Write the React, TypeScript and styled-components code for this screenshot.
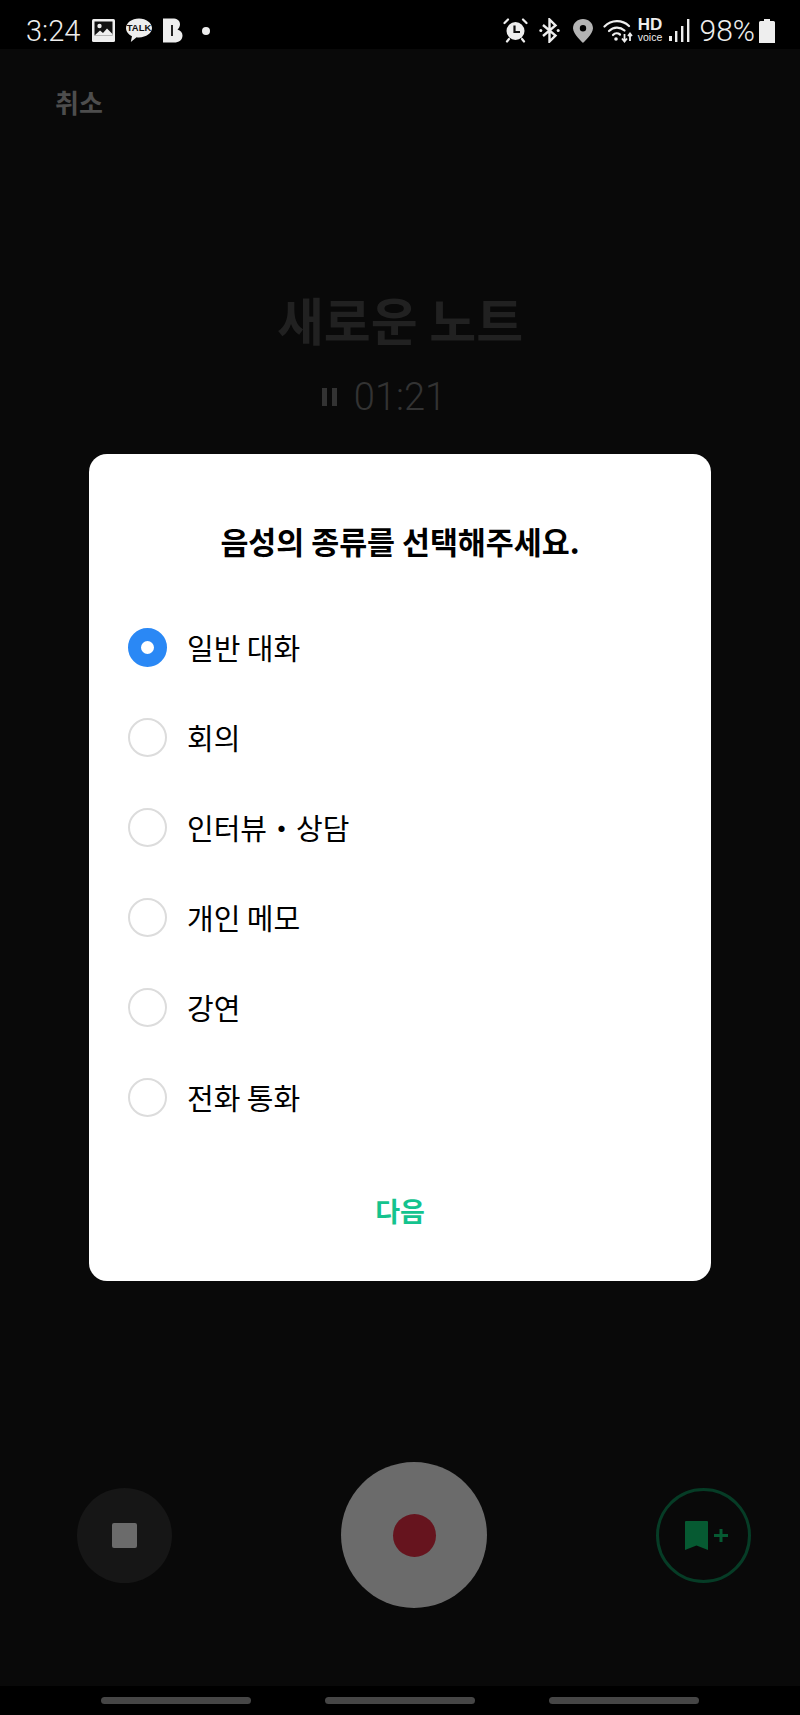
import React from 'react';
import styled, { createGlobalStyle } from 'styled-components';

const OPTIONS = ['일반 대화', '회의', '인터뷰・상담', '개인 메모', '강연', '전화 통화'];

const App = () => {
  return (
    <Screen>
      <GlobalStyle />
      <StatusBar>
        <StatusLeft>
          <Clock>3:24</Clock>
          <svg width="23" height="23" viewBox="0 0 23 23">
            <rect width="23" height="23" rx="1.5" fill="#eee" />
            <rect x="2.5" y="2.5" width="18" height="14" fill="#111" />
            <circle cx="7.5" cy="7" r="2.2" fill="#eee" />
            <path fill="#eee" d="M2.5 16.5 8 11.5l3 2.5 4-4.500 5.500 5.500v1.500z" />
          </svg>
          <svg width="26" height="25" viewBox="0 0 27 25">
            <path fill="#eee" d="M13.5 0C6 0 0 4.500 0 10c0 3.600 2.500 6.700 6.200 8.500L5 24.500l6-5c.8.100 1.600.2 2.500.2 7.500 0 13.500-4.400 13.500-9.700S21 0 13.500 0z" />
            <text x="13.5" y="13.5" textAnchor="middle" fontSize="9.8" fontWeight="700" fontFamily="Liberation Sans, sans-serif" fill="#111">TALK</text>
          </svg>
          <svg width="20" height="25" viewBox="0 0 20 25">
            <path fill="#eee" d="M0 .5h9.500c4.500 0 7.500 2 7.500 5.800 0 2.300-1 4-2.500 5.200 3 1.100 5 3.200 5 6 0 4.500-3.500 7-8.500 7H0z" />
            <rect x="8" y="7" width="2" height="11" fill="#222" />
          </svg>
          <Dot />
        </StatusLeft>
        <StatusRight>
          <StatusIcon width="25" height="25" viewBox="0 0 25 25" $gap={0}>
            <path stroke="#eee" strokeWidth="2.2" strokeLinecap="round" fill="none" d="M1.500 5l3.500-3.500M23.500 5L20 1.500M6 21l-2 2.500M19 21l2 2.500" />
            <circle cx="12.5" cy="13" r="9" fill="#eee" />
            <path stroke="#111" strokeWidth="2.2" fill="none" d="M11.500 7.500v6.500h5.500" />
          </StatusIcon>
          <StatusIcon width="21" height="25" viewBox="0 0 21 25" $gap={11}>
            <path stroke="#eee" strokeWidth="2.4" fill="none" d="M4 7l12.500 10.500-6 6V1.500l6 6L4 18" />
            <circle cx="1.8" cy="12.5" r="1.5" fill="#eee" />
            <circle cx="19.2" cy="12.5" r="1.5" fill="#eee" />
          </StatusIcon>
          <StatusIcon width="20" height="24" viewBox="0 0 20 24" $gap={13}>
            <path fillRule="evenodd" fill="#b4b4b4" d="M10 0C4.500 0 0 4 0 9.300 0 15 10 24 10 24s10-9 10-14.700C20 4 15.500 0 10 0zm0 6a3.200 3.200 0 1 1 0 6.400A3.200 3.200 0 0 1 10 6z" />
          </StatusIcon>
          <StatusIcon width="30" height="24" viewBox="0 0 30 24" $gap={10}>
            <g fill="none" stroke="#eee" strokeWidth="2.2" strokeLinecap="round">
              <path d="M1.500 7.500C8.500.5 19 .5 26 7" />
              <path d="M6 12c4.500-4.500 11-4.500 15.500-.5" />
              <path d="M10 16c2-2 5-2 7-.5" />
            </g>
            <circle cx="13" cy="20" r="1.8" fill="#eee" />
            <path stroke="#eee" strokeWidth="1.8" fill="none" d="M21.500 15v7M19 19.500l2.500 3 2.500-3M27 22v-7M25 17l2-2.500 2 2.500" />
          </StatusIcon>
          <HdBadge>
            <HdMark>HD</HdMark>
            <HdVoice>voice</HdVoice>
          </HdBadge>
          <StatusIcon width="21" height="23" viewBox="0 0 21 23" $gap={6}>
            <rect x="0" y="17" width="3" height="5" fill="#eee" />
            <rect x="6" y="12" width="2.4" height="11" fill="#eee" />
            <rect x="12" y="7" width="2.4" height="16" fill="#eee" />
            <rect x="18" y="0" width="2.4" height="23" fill="#eee" />
          </StatusIcon>
          <Battery>98%</Battery>
          <StatusIcon width="16" height="24" viewBox="0 0 16 24" $gap={4}>
            <path fill="#eee" d="M5 0h6v2h3.500A1.500 1.500 0 0 1 16 3.500V24H0V3.500A1.500 1.500 0 0 1 1.500 2H5z" />
          </StatusIcon>
        </StatusRight>
      </StatusBar>

      <Recorder>
        <CancelLink>취소</CancelLink>
        <NoteHeading>
          <NoteTitle>새로운 노트</NoteTitle>
          <Timer>
            <PauseMark>
              <span />
              <span />
            </PauseMark>
            01:21
          </Timer>
        </NoteHeading>
        <Controls>
          <StopButton>
            <StopSquare />
          </StopButton>
          <RecordButton>
            <RecordDot />
          </RecordButton>
          <BookmarkButton>
            <svg width="43" height="29" viewBox="0 0 43 29">
              <path fill="#065a32" d="M0 1a1 1 0 0 1 1-1h21a1 1 0 0 1 1 1v28l-11.500-4.500L0 29z" />
              <path stroke="#065a32" strokeWidth="3" fill="none" d="M29 14.500h14M36 8v13" />
            </svg>
          </BookmarkButton>
        </Controls>
      </Recorder>

      <NavBar>
        <NavPill />
        <NavPill />
        <NavPill />
      </NavBar>

      <Overlay>
        <Dialog>
          <DialogTitle>음성의 종류를 선택해주세요.</DialogTitle>
          <OptionList>
            {OPTIONS.map((label, index) => (
              <Option key={label}>
                <Radio $checked={index === 0} />
                <OptionLabel>{label}</OptionLabel>
              </Option>
            ))}
          </OptionList>
          <NextButton>다음</NextButton>
        </Dialog>
      </Overlay>
    </Screen>
  );
};

export default App;

const GlobalStyle = createGlobalStyle`
  html, body {
    margin: 0;
    padding: 0;
    background: #000;
  }
`;

const Screen = styled.div`
  position: relative;
  width: 800px;
  height: 1715px;
  display: flex;
  flex-direction: column;
  overflow: hidden;
  background: #090909;
  font-family: 'Noto Sans CJK KR', 'Noto Sans', sans-serif;
`;

const StatusBar = styled.header`
  box-sizing: border-box;
  height: 49px;
  flex: none;
  display: flex;
  align-items: center;
  justify-content: space-between;
  padding: 12px 25px 0 26px;
  background: #000;
  color: #eee;
`;

const StatusLeft = styled.div`
  display: flex;
  align-items: center;
  gap: 11px;
`;

const Clock = styled.span`
  font-family: Roboto, sans-serif;
  font-size: 29px;
  font-weight: 300;
  line-height: 30px;
  margin-right: 1px;
`;

const Dot = styled.span`
  width: 8px;
  height: 8px;
  margin-left: 8px;
  border-radius: 50%;
  background: #eee;
`;

const StatusRight = styled.div`
  display: flex;
  align-items: center;
`;

const StatusIcon = styled.svg<{ $gap: number }>`
  flex: none;
  margin-left: ${({ $gap }) => $gap}px;
`;

const HdBadge = styled.div`
  display: flex;
  flex-direction: column;
  align-items: center;
  width: 25px;
  margin-left: 5px;
  font-family: 'Liberation Sans', sans-serif;
  line-height: 1;
`;

const HdMark = styled.span`
  font-size: 17px;
  font-weight: 700;
  height: 14px;
  line-height: 14px;
`;

const HdVoice = styled.span`
  font-size: 10.5px;
`;

const Battery = styled.span`
  margin-left: 10px;
  font-family: Roboto, sans-serif;
  font-size: 30px;
  font-weight: 300;
  line-height: 30px;
`;

const Recorder = styled.main`
  flex: 1;
  display: flex;
  flex-direction: column;
`;

const CancelLink = styled.div`
  margin: 36px 0 0 55px;
  font-size: 26px;
  line-height: 34px;
  font-weight: 700;
  color: #4d4d4d;
`;

const NoteHeading = styled.div`
  display: flex;
  flex-direction: column;
  align-items: center;
  margin-top: 165px;
`;

const NoteTitle = styled.h1`
  margin: 0;
  font-size: 51px;
  line-height: 70px;
  font-weight: 700;
  color: #212121;
`;

const Timer = styled.div`
  display: flex;
  align-items: center;
  gap: 17px;
  margin: 20px 32px 0 0;
  font-family: Roboto, sans-serif;
  font-size: 38px;
  font-weight: 300;
  line-height: 46px;
  color: #333;
`;

const PauseMark = styled.div`
  display: flex;
  gap: 5px;

  span {
    width: 5px;
    height: 18px;
    background: #333;
  }
`;

const Controls = styled.div`
  margin-top: auto;
  margin-bottom: 78px;
  display: flex;
  align-items: center;
  justify-content: space-between;
  padding: 0 49px 0 77px;
`;

const StopButton = styled.div`
  width: 95px;
  height: 95px;
  border-radius: 50%;
  display: flex;
  align-items: center;
  justify-content: center;
  background: #161616;
`;

const StopSquare = styled.div`
  width: 25px;
  height: 25px;
  border-radius: 2px;
  background: #6b6b6b;
`;

const RecordButton = styled.div`
  width: 146px;
  height: 146px;
  border-radius: 50%;
  display: flex;
  align-items: center;
  justify-content: center;
  background: #6b6b6b;
`;

const RecordDot = styled.div`
  width: 43px;
  height: 43px;
  border-radius: 50%;
  background: #66141e;
`;

const BookmarkButton = styled.div`
  box-sizing: border-box;
  width: 95px;
  height: 95px;
  border: 3px solid #063c26;
  border-radius: 50%;
  display: flex;
  align-items: center;
  justify-content: center;
  padding-left: 6px;
`;

const NavBar = styled.nav`
  height: 29px;
  flex: none;
  display: flex;
  justify-content: center;
  gap: 74px;
  padding-top: 11px;
  box-sizing: border-box;
  background: #000;
`;

const NavPill = styled.div`
  width: 150px;
  height: 7px;
  border-radius: 4px;
  background: #464646;
`;

const Overlay = styled.div`
  position: absolute;
  inset: 0;
  display: flex;
  justify-content: center;
  align-items: flex-start;
  padding-top: 454px;
  box-sizing: border-box;
`;

const Dialog = styled.section`
  box-sizing: border-box;
  width: 622px;
  height: 827px;
  padding: 0 39px;
  display: flex;
  flex-direction: column;
  border-radius: 18px;
  background: #fff;
`;

const DialogTitle = styled.h2`
  margin: 65px 0 0;
  text-align: center;
  font-size: 30.4px;
  line-height: 44px;
  font-weight: 700;
  color: #000;
`;

const OptionList = styled.div`
  margin-top: 65px;
  display: flex;
  flex-direction: column;
  gap: 51px;
`;

const Option = styled.div`
  display: flex;
  align-items: center;
  gap: 20px;
  height: 39px;
`;

const Radio = styled.span<{ $checked: boolean }>`
  box-sizing: border-box;
  width: 39px;
  height: 39px;
  flex: none;
  border-radius: 50%;
  border: ${({ $checked }) => ($checked ? '13px solid #2a88f5' : '2px solid #dcdcdc')};
  background: #fff;
`;

const OptionLabel = styled.span`
  font-size: 29px;
  line-height: 39px;
  color: #000;
`;

const NextButton = styled.div`
  margin-top: auto;
  margin-bottom: 50px;
  text-align: center;
  font-size: 27px;
  line-height: 40px;
  font-weight: 700;
  color: #14c38e;
`;
